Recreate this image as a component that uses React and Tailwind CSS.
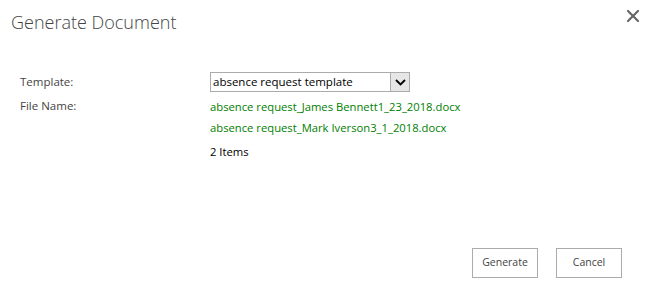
import { X } from "lucide-react";

const files = [
  "absence request_James Bennett1_23_2018.docx",
  "absence request_Mark Iverson3_1_2018.docx",
];

export default function App() {
  return (
    <div className="relative w-[650px] h-[296px] bg-white text-[#444] font-['Open_Sans',sans-serif] flex flex-col">
      {/* Header */}
      <div className="flex items-start justify-between pl-[11px] pr-[7px] pt-[8px]">
        <h1 className="text-[18px] font-light leading-[28px] text-[#444]">Generate Document</h1>
        <button className="-mt-[2px] text-[#666]">
          <X size={20} strokeWidth={2.6} />
        </button>
      </div>

      {/* Form */}
      <div className="grid grid-cols-[190px_1fr] pl-[20px] mt-[36px] text-[11.5px]">
        <div className="leading-[20px] h-[20px]">Template:</div>
        <div>
          <div className="flex w-[200px] h-[20px] border border-[#ababab] bg-white">
            <span className="flex-1 pl-[2px] leading-[18px] text-black">absence request template</span>
            <span className="w-[19px] h-[18px] bg-[#e6e6e6] border-l border-[#ababab] flex items-center justify-center">
              <svg width="11" height="7" viewBox="0 0 11 7">
                <path d="M1 1l4.5 4.5L10 1" fill="none" stroke="#000" strokeWidth="1.8" />
              </svg>
            </span>
          </div>
        </div>

        <div className="mt-[4px] leading-[20px]">File Name:</div>
        <div className="mt-[4px] flex flex-col text-[11.25px]">
          {files.map((f) => (
            <div key={f} className="leading-[21px] text-[#008000]">
              {f}
            </div>
          ))}
          <div className="mt-[4px] leading-[20px] text-black">2 Items</div>
        </div>
      </div>

      {/* Footer buttons */}
      <div className="mt-auto mb-[18px] flex justify-end gap-[18px] pr-[28px] text-[10.5px]">
        <button className="w-[66px] h-[30px] border border-[#ababab] bg-white text-[#444]">Generate</button>
        <button className="w-[66px] h-[30px] border border-[#ababab] bg-white text-[#444]">Cancel</button>
      </div>
    </div>
  );
}
